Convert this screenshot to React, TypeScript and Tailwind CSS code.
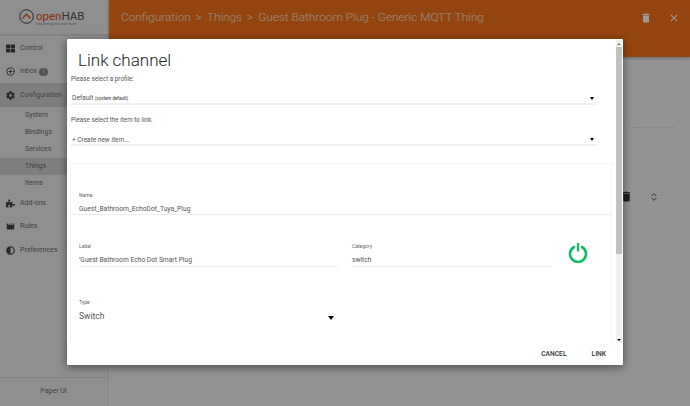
import { ChevronsUpDown, CirclePlus } from "lucide-react";
import type { ReactNode } from "react";
import { FaAdjust, FaCog, FaPuzzlePiece, FaThLarge } from "react-icons/fa";
import { MdClose, MdDelete, MdMovie } from "react-icons/md";

const roboto = "font-['Roboto',sans-serif]";

function NavItem({ icon, label, badge, active, h }: { icon: ReactNode; label: string; badge?: string; active?: boolean; h: string }) {
  return (
    <div className={`flex items-center pl-[4px] text-[7px] text-[#6e6e6e] ${h} ${active ? "bg-[#d3d3d3]" : ""}`}>
      <span className="flex w-[13px] justify-center text-[9px] text-[#444]">{icon}</span>
      <span className="ml-[3px]">{label}</span>
      {badge && (
        <span className="ml-[2px] flex h-[8px] w-[9px] items-center justify-center rounded-full bg-[#8a8a8a] text-[5px] text-[#eee]">
          {badge}
        </span>
      )}
    </div>
  );
}

function SubItem({ label, active }: { label: string; active?: boolean }) {
  return (
    <div className={`flex h-[17px] items-center pl-[25px] text-[7px] text-[#6e6e6e] ${active ? "bg-[#d3d3d3]" : ""}`}>
      {label}
    </div>
  );
}

function Caret({ className }: { className: string }) {
  return <div className={`border-x-transparent border-t-black ${className}`} />;
}

function Field({ label, value, className }: { label: string; value: string; className: string }) {
  return (
    <div className={className}>
      <div className="text-[5px] leading-[7px] text-[#666]">{label}</div>
      <div className="mt-[5px] border-b border-[#ececec] pb-[1px] text-[6.7px] leading-[10px] text-[#555]">{value}</div>
    </div>
  );
}

function SelectRow({ children }: { children: ReactNode }) {
  return (
    <div className="flex h-[13px] items-end justify-between border-b-2 border-[#f1f1f1] pl-[1px] pr-[3px] text-[6.7px] leading-[8px] text-[#555]">
      <div>{children}</div>
      <Caret className="mb-[3px] border-x-[2.5px] border-t-[3px]" />
    </div>
  );
}

export default function App() {
  return (
    <div className={`relative flex h-[406px] w-[690px] overflow-hidden bg-[#f4f4f4] antialiased ${roboto}`}>
      {/* sidebar */}
      <aside className="flex h-full w-[109px] shrink-0 flex-col border-r border-[#e2e2e2] bg-[#eeeeee]">
        <div className="flex h-[36px] items-center border-b-2 border-[#dcdcdc] pl-[19px]">
          <svg width="15" height="15" viewBox="0 0 15 15" fill="none" className="mt-[-1px] shrink-0">
            <circle cx="7.5" cy="7.5" r="6.8" stroke="#444" strokeWidth="1" />
            <path d="M3.6 9.5 L7.5 5.2 L11.4 9.5" stroke="#e64a19" strokeWidth="1.2" />
          </svg>
          <div className="ml-[2px] mt-[2px]">
            <div className="text-[11.5px] leading-[11px] text-[#555]">
              <span className="text-[#e64a19]">open</span>HAB
            </div>
            <div className="text-[3.2px] leading-[4px] text-[#888]">empowering the smart home</div>
          </div>
        </div>
        <div className="mt-px">
          <NavItem icon={<FaThLarge />} label="Control" h="h-[23px]" />
          <NavItem icon={<CirclePlus size={9} strokeWidth={2.5} />} label="Inbox" badge="1" h="h-[23px]" />
          <NavItem icon={<FaCog />} label="Configuration" active h="h-[24px]" />
          <SubItem label="System" />
          <SubItem label="Bindings" />
          <SubItem label="Services" />
          <SubItem label="Things" active />
          <SubItem label="Items" />
          <NavItem icon={<FaPuzzlePiece />} label="Add-ons" h="h-[23px]" />
          <NavItem icon={<MdMovie />} label="Rules" h="h-[23px]" />
          <NavItem icon={<FaAdjust />} label="Preferences" h="h-[24px]" />
        </div>
        <div className="mt-auto flex h-[29px] items-center justify-center border-t border-[#dcdcdc] pb-[1px] pr-[1px] text-[7px] text-[#6e6e6e]">Paper UI</div>
      </aside>

      {/* main page behind the dialog */}
      <main className="flex min-w-0 flex-1 flex-col">
        <header className="flex h-[57px] items-start justify-between bg-[#f77319] pl-[12px] pr-[10px] shadow-[0_1px_3px_rgba(0,0,0,0.3)]">
          <div className="mt-[9px] flex items-center gap-[5px] text-[11.8px] font-light whitespace-nowrap text-white/80">
            <span>Configuration</span>
            <span>&gt;</span>
            <span>Things</span>
            <span>&gt;</span>
            <span>Guest Bathroom Plug - Generic MQTT Thing</span>
          </div>
          <div className="mt-[12px] flex items-center gap-[16px] text-white">
            <MdDelete size={12} />
            <MdClose size={12} />
          </div>
        </header>
        <div className="flex flex-1 flex-col items-end pr-[31px] pt-[70px]">
          <div className="h-px w-[47px] translate-x-[16px] bg-[#e4e4e4]" />
          <div className="mt-[62px] flex items-center gap-[16px] text-[#333]">
            <MdDelete size={13} />
            <ChevronsUpDown size={10} />
          </div>
        </div>
      </main>

      {/* dim layer */}
      <div className="absolute inset-0 bg-black/40" />

      {/* dialog */}
      <div className="absolute left-[67px] top-[39px] flex h-[326px] w-[556px] flex-col rounded-[1px] bg-white pl-[3px] pr-px pt-px shadow-[0_2px_8px_rgba(0,0,0,0.5)]">
        <div className="flex h-[303px] min-h-0">
          <div className="min-w-0 flex-1 overflow-hidden pl-px">
            <h2 className="ml-[7px] mt-[7px] text-[17px] font-light leading-[26px] text-[#222]">Link channel</h2>
            <p className="mt-[1px] text-[6.3px] leading-[10px] text-[#555]">Please select a profile:</p>
            <div className="mt-[8px] w-[526px]">
              <SelectRow>
                Default <span className="text-[4.5px] font-medium">(system default)</span>
              </SelectRow>
            </div>
            <p className="mt-[10px] text-[6.3px] leading-[10px] text-[#555]">Please select the item to link:</p>
            <div className="mt-[8px] w-[526px]">
              <SelectRow>
                <span className="italic">+ Create new item...</span>
              </SelectRow>
            </div>
            <div className="ml-[-1px] mt-[17px] h-[178px] w-[542px] border-x border-t border-[#f4f4f4]">
              <div className="border-b border-[#ececec] pl-[8px] pt-[28px]">
                <div className="text-[5px] leading-[7px] text-[#666]">Name</div>
                <div className="mt-[6px] pb-px text-[6.7px] leading-[8px] text-[#555]">Guest_Bathroom_EchoDot_Tuya_Plug</div>
              </div>
              <div className="mt-[28px] flex items-start pl-[8px]">
                <Field label="Label" value={"\u2019Guest Bathroom Echo Dot Smart Plug"} className="w-[259px]" />
                <Field label="Category" value="switch" className="ml-[14px] w-[200px]" />
                <svg width="20" height="20" viewBox="0 0 20 20" fill="none" className="ml-[16px]">
                  <path d="M6 4 A8 8 0 1 0 14 4" stroke="#0dbf5e" strokeWidth="2.6" strokeLinecap="round" />
                  <path d="M10 0 V8.5" stroke="#0dbf5e" strokeWidth="2.2" />
                </svg>
              </div>
              <div className="mt-[32px] pl-[8px]">
                <div className="text-[5px] leading-[7px] text-[#666]">Type</div>
                <div className="mt-[3px] flex w-[255px] items-center justify-between text-[8.5px] leading-[14px] text-[#555]">
                  <span>Switch</span>
                  <Caret className="mt-[4px] border-x-[3.5px] border-t-[4px]" />
                </div>
              </div>
            </div>
          </div>
          {/* scrollbar */}
          <div className="ml-[4px] flex w-[6px] shrink-0 flex-col items-center bg-[#f1f1f1]">
            <div className="flex h-[7px] items-center">
              <div className="border-x-2 border-b-2 border-x-transparent border-b-[#777]" />
            </div>
            <div className="h-[207px] w-full bg-[#c1c1c1]" />
            <div className="mt-auto flex h-[7px] items-center">
              <Caret className="border-x-2 border-t-2" />
            </div>
          </div>
        </div>
        <div className="flex flex-1 items-center justify-end gap-[25px] pr-[16px] text-[6.7px] font-medium text-[#333]">
          <span>CANCEL</span>
          <span>LINK</span>
        </div>
      </div>
    </div>
  );
}
